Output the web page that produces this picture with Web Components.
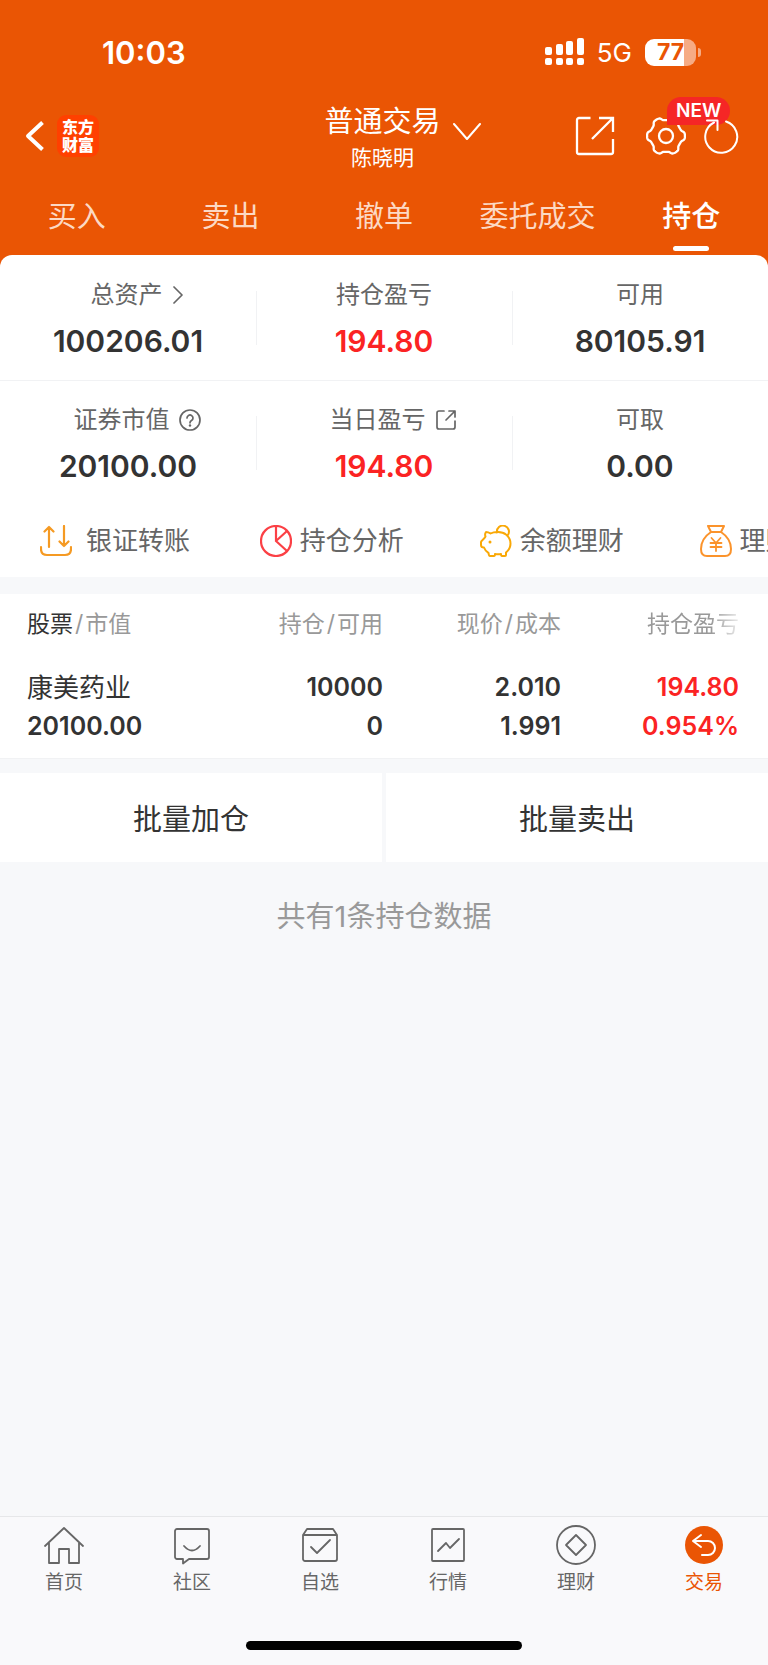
<!DOCTYPE html>
<html lang="zh-CN">
<head>
<meta charset="utf-8">
<meta name="viewport" content="width=device-width, initial-scale=1">
<title>普通交易 - 持仓</title>
<style>
  html {
    height: 100%;
  }
  body {
    margin: 0;
    min-height: 100%;
    display: flex;
    flex-direction: column;
    background: #f7f8fa;
    color: #333;
    font-family: Inter, "Noto Sans CJK SC", sans-serif;
    --brand: #ea5504;
    --up: #fb2323;
    --line: #f1f2f4;
    --muted: #666;
  }
  main {
    flex: 1;
  }
  .top {
    background: var(--brand);
  }
</style>
</head>
<body>
  <div class="top">
    <status-bar time="10:03" network="5G" battery="77"></status-bar>
    <trade-header badge="NEW">
      普通交易
      <span slot="account">陈晓明</span>
    </trade-header>
    <trade-tabs items="买入,卖出,撤单,委托成交,持仓" active="持仓"></trade-tabs>
    <asset-panel>
      <asset-cell value="100206.01" icon="right">总资产</asset-cell>
      <asset-cell value="194.80" up>持仓盈亏</asset-cell>
      <asset-cell value="80105.91">可用</asset-cell>
      <asset-cell value="20100.00" icon="help">证券市值</asset-cell>
      <asset-cell value="194.80" icon="open" up>当日盈亏</asset-cell>
      <asset-cell value="0.00">可取</asset-cell>
    </asset-panel>
  </div>
  <main>
    <quick-actions></quick-actions>
    <position-table></position-table>
    <batch-actions></batch-actions>
  </main>
  <bottom-nav active="交易"></bottom-nav>

<script>
const icons = {
  back: { box: '0 0 20 32', w: 20, svg: '<path d="M17.500 2.500 3 16l14.500 13.500" stroke-width="4" stroke-linecap="butt"/>' },
  down: { box: '0 0 28 18', w: 28, svg: '<path d="m1 1 13 15L27 1" stroke-width="2"/>' },
  share: { box: '0 0 40 40', w: 40, svg: '<path d="M15.500 2H4a2 2 0 0 0-2 2v32a2 2 0 0 0 2 2h32a2 2 0 0 0 2-2V23M24 2h14v14M38 2 17 23" stroke-width="2.300" stroke-linecap="butt" stroke-linejoin="miter"/>' },
  gear: { box: '0 0 40 40', w: 40, svg: '' },
  refresh: { box: '0 0 36 38', w: 36, svg: '<path d="M22 4.500A16 16 0 1 1 10 5.500" stroke-width="2"/><path d="M3 3.500h10.500V13" stroke-width="2"/>' },
  right: { box: '0 0 12 18', w: 12, svg: '<path d="m2 1 8 8-8 8" stroke-width="1.700"/>' },
  help: { box: '0 0 22 22', w: 22, svg: '<circle cx="11" cy="11" r="10" stroke-width="1.700"/><path d="M8 9a3 3 0 1 1 4.500 2.600c-1 .6-1.500 1-1.500 2.200" stroke-width="1.700"/><circle cx="11" cy="16.500" r="1.200" fill="currentColor" stroke="none"/>' },
  open: { box: '0 0 22 22', w: 22, svg: '<path d="M9 2H4a2 2 0 0 0-2 2v14a2 2 0 0 0 2 2h14a2 2 0 0 0 2-2v-6M14 2h6v6M20 2l-9 9" stroke-width="1.700"/>' },
  transfer: { box: '0 0 32 32', w: 32, svg: '<path d="M9 22V2M4.500 6.500 9 2l4.500 4.500M24 1v20M19.500 16.500 24 21l4.500-4.500M1 22v2q0 6 6 6h18q6 0 6-6v-2" stroke-width="2.200"/>' },
  pie: { box: '0 0 32 32', w: 32, svg: '<circle cx="16" cy="16" r="15" stroke-width="2.200"/><path d="M16 1v15l11 10M16 16 27 6" stroke-width="2.200"/>' },
  pig: { box: '0 0 32 32', w: 32, svg: '<path d="M6 7c2 0 3 .5 4.500 1.500C14 6.500 22 6 26 9.500c6 5 6 13 0 18v2.500q0 1-1 1h-3q-1 0-1-2-3 .5-6 0 0 2-1 2h-4q-1 0-1.500-3-3-1.500-4.500-5.500c-2 0-3-1-3-2.500v-3c0-1.500 3-2.500 4.500-5.500Q4.500 9 6 7ZM17 7.500a6 6 0 1 1 10.500 3" stroke-width="2"/><circle cx="10" cy="17" r="1.500" fill="currentColor" stroke="none"/>' },
  bag: { box: '0 0 32 32', w: 32, svg: '<path d="M8 1h16l-3 6H11ZM11 7C5 11 1 17 1 24q0 7 6 7h18q6 0 6-7c0-7-4-13-10-17" stroke-width="2"/><path d="m11.500 13 4.500 5 4.500-5M10.500 18h11M10.500 22h11M16 18v8" stroke-width="1.800"/>' },
  home: { box: '0 0 40 40', w: 40, svg: '<path d="M1 21 20 3l19 18M5 18v20h10V24h10v14h10V18" stroke-width="1.800"/>' },
  chat: { box: '0 0 40 40', w: 40, svg: '<path d="M5 4h30a2 2 0 0 1 2 2v26a2 2 0 0 1-2 2H17l-6 4.500V34H5a2 2 0 0 1-2-2V6a2 2 0 0 1 2-2ZM12 21q8 9 16 0" stroke-width="1.800"/>' },
  select: { box: '0 0 40 40', w: 40, svg: '<path d="M3 10 7 4h26l4 6v24a2 2 0 0 1-2 2H5a2 2 0 0 1-2-2ZM3 10h34M11 22l6 6 13-13" stroke-width="1.800"/>' },
  market: { box: '0 0 40 40', w: 40, svg: '<rect x="4" y="4" width="32" height="32" rx="1" stroke-width="1.800"/><path d="m10 26 8-8 4 5 9-9" stroke-width="1.800"/>' },
  wealth: { box: '0 0 40 40', w: 40, svg: '<circle cx="20" cy="20" r="19" stroke-width="1.800"/><path d="m20 10 10 10-10 10-10-10Z" stroke-width="1.800"/>' },
  trade: { box: '0 0 40 40', w: 40, svg: '<circle cx="20" cy="20" r="19" fill="currentColor" stroke="none"/><path d="m17 10-8 6 8 6M9 16h15a7 7 0 0 1 0 14h-6" stroke="#fff" stroke-width="2"/>' }
};

// The radius swings between tooth and valley, teeth point left and right.
function gearPath(cx, cy, teeth) {
  let d = '';
  for (let i = 0; i <= 180; i++) {
    const a = (i / 180) * Math.PI * 2;
    const r = 17.4 + 1.6 * Math.tanh(Math.cos(a * teeth) * 2);
    d += (i ? 'L' : 'M') + (cx + r * Math.cos(a)).toFixed(2) + ' ' + (cy + r * Math.sin(a)).toFixed(2);
  }
  return d + 'Z';
}
icons.gear.svg = `<path d="${gearPath(20, 20, 6)}" stroke-width="2.300"/><circle cx="20" cy="20" r="7" stroke-width="2.300"/>`;

class BaseElement extends HTMLElement {
  connectedCallback() {
    if (this.shadowRoot) return;
    this.attachShadow({ mode: 'open' });
    this.shadowRoot.innerHTML = this.render();
  }
}

class AppIcon extends BaseElement {
  render() {
    const icon = icons[this.getAttribute('name')];
    return `
      <style>
        :host { display: inline-flex; flex: none; }
        svg { display: block; fill: none; stroke: currentColor; stroke-linecap: round; stroke-linejoin: round; }
      </style>
      <svg width="${icon.w}" viewBox="${icon.box}" aria-hidden="true">${icon.svg}</svg>
    `;
  }
}

class StatusBar extends BaseElement {
  render() {
    const level = this.getAttribute('battery');
    return `
      <style>
        :host {
          display: flex;
          align-items: center;
          justify-content: space-between;
          height: 104px;
          padding: 0 67px 0 102px;
          color: #fff;
        }
        .time { font-size: 31px; font-weight: 600; }
        .right { display: flex; align-items: center; gap: 13px; }
        .net { font-size: 26px; }
        .signal { display: block; }
        .battery { display: flex; align-items: center; gap: 2px; }
        .body {
          width: 51px;
          line-height: 27px;
          border-radius: 9px;
          text-align: center;
          font-size: 23px;
          font-weight: 700;
          color: var(--brand);
          background: linear-gradient(90deg, #fff ${level}%, #f6ab84 ${level}%);
        }
        .cap { width: 3px; height: 9px; border-radius: 0 4px 4px 0; background: #f6ab84; }
      </style>
      <span class="time">${this.getAttribute('time')}</span>
      <span class="right">
        <svg class="signal" width="39" height="28" fill="#fff" aria-hidden="true">
          <rect x="0" y="9" width="7" height="8" rx="2"/><rect x="11" y="6" width="7" height="11" rx="2"/>
          <rect x="21" y="3" width="7" height="14" rx="2"/><rect x="32" y="0" width="7" height="17" rx="2"/>
          <rect x="0" y="20" width="7" height="7" rx="2"/><rect x="11" y="20" width="7" height="7" rx="2"/>
          <rect x="21" y="20" width="7" height="7" rx="2"/><rect x="32" y="20" width="7" height="7" rx="2"/>
        </svg>
        <span class="net">${this.getAttribute('network')}</span>
        <span class="battery"><span class="body">${level}</span><span class="cap"></span></span>
      </span>
    `;
  }
}

class TradeHeader extends BaseElement {
  render() {
    return `
      <style>
        :host {
          display: grid;
          grid-template-columns: 1fr auto 1fr;
          grid-template-rows: 64px;
          align-items: center;
          padding: 0 28px 0 25px;
          color: #fff;
        }
        button { display: flex; padding: 0; border: 0; background: none; color: inherit; font: inherit; }
        .left, .right { display: flex; align-items: center; }
        .left { gap: 12px; }
        .logo {
          width: 42px;
          height: 42px;
          box-sizing: border-box;
          padding-top: 2px;
          border-radius: 9px;
          background: #ff4000;
          text-align: center;
          font-family: "Noto Sans CJK SC", sans-serif;
          font-size: 16px;
          font-weight: 900;
          line-height: 18px;
        }
        .title { position: relative; padding-top: 5px; text-align: center; }
        .name { font-size: 29px; line-height: 38px; }
        .account { font-size: 21px; line-height: 34px; }
        .arrow { position: absolute; left: 100%; top: 25px; margin-left: 12px; }
        .right { justify-content: flex-end; }
        .share { margin-right: 31px; }
        .gear { position: relative; margin-right: 18px; }
        .badge {
          position: absolute;
          left: 21px;
          top: -19px;
          padding: 0 9px;
          border-radius: 14px 14px 14px 0;
          background: #f52626;
          font-size: 19px;
          font-weight: 600;
          line-height: 28px;
        }
        .refresh { position: relative; }
      </style>
      <div class="left">
        <button aria-label="返回"><app-icon name="back"></app-icon></button>
        <div class="logo">东方<br>财富</div>
      </div>
      <button class="title">
        <span>
          <div class="name"><slot></slot></div>
          <div class="account"><slot name="account"></slot></div>
        </span>
        <app-icon class="arrow" name="down"></app-icon>
      </button>
      <div class="right">
        <button class="share" aria-label="分享"><app-icon name="share"></app-icon></button>
        <button class="gear" aria-label="设置"><app-icon name="gear"></app-icon><span class="badge">${this.getAttribute('badge')}</span></button>
        <button class="refresh" aria-label="刷新"><app-icon name="refresh"></app-icon></button>
      </div>
    `;
  }
}

class TradeTabs extends BaseElement {
  render() {
    const active = this.getAttribute('active');
    const tabs = this.getAttribute('items').split(',').map((item) =>
      `<button role="tab" aria-selected="${item === active}">${item}</button>`
    ).join('');
    return `
      <style>
        :host { display: block; }
        div { display: grid; grid-template-columns: repeat(5, 1fr); padding-top: 18px; }
        button {
          display: flex;
          flex-direction: column;
          align-items: center;
          height: 69px;
          padding: 9px 0 0;
          border: 0;
          background: none;
          color: #fcd9c4;
          font-family: inherit;
          font-size: 29px;
          line-height: 44px;
        }
        button[aria-selected="true"] { color: #fff; font-weight: 500; }
        button[aria-selected="true"]::after {
          content: "";
          width: 36px;
          height: 5px;
          margin-top: 7px;
          border-radius: 3px;
          background: #fff;
        }
      </style>
      <div role="tablist">${tabs}</div>
    `;
  }
}

class AssetPanel extends BaseElement {
  render() {
    return `
      <style>
        :host {
          display: grid;
          grid-template-columns: repeat(3, 1fr);
          border-radius: 12px 12px 0 0;
          background: linear-gradient(var(--line), var(--line)) 0 125px / 100% 1px no-repeat #fff;
        }
        ::slotted(asset-cell:nth-child(3n+2)), ::slotted(asset-cell:nth-child(3n)) { --edge: var(--line); }
      </style>
      <slot></slot>
    `;
  }
}

class AssetCell extends BaseElement {
  render() {
    const icon = this.getAttribute('icon');
    return `
      <style>
        :host {
          display: flex;
          flex-direction: column;
          align-items: center;
          height: 125px;
          box-sizing: border-box;
          padding-top: 22px;
          background: linear-gradient(var(--edge, transparent), var(--edge, transparent)) left 36px / 1px 54px no-repeat;
        }
        .label { display: flex; align-items: center; gap: 9px; color: var(--muted); font-size: 24px; line-height: 36px; }
        :host([icon]) .label { padding-left: 18px; }
        .value { margin-top: 8px; font-size: 30px; font-weight: 600; line-height: 40px; }
        :host([up]) .value { color: var(--up); }
      </style>
      <div class="label"><slot></slot>${icon ? `<app-icon name="${icon}"></app-icon>` : ''}</div>
      <div class="value">${this.getAttribute('value')}</div>
    `;
  }
}

class QuickActions extends BaseElement {
  render() {
    const items = [
      ['transfer', '银证转账', '#f59a23'],
      ['pie', '持仓分析', '#fb4045'],
      ['pig', '余额理财', '#f9a806'],
      ['bag', '理财', '#fb932b']
    ];
    return `
      <style>
        :host { display: flex; height: 72px; padding-left: 40px; overflow: hidden; background: #fff; }
        button {
          flex: 0 0 30.2%;
          display: flex;
          align-items: center;
          gap: 8px;
          padding: 0 0 1px;
          border: 0;
          background: none;
          color: var(--muted);
          font-family: inherit;
          font-size: 26px;
          line-height: 36px;
          white-space: nowrap;
        }
        button:first-of-type { gap: 14px; }
      </style>
      ${items.map(([icon, text, color]) =>
        `<button><app-icon name="${icon}" style="color:${color}"></app-icon>${text}</button>`).join('')}
    `;
  }
}

class PositionTable extends BaseElement {
  render() {
    return `
      <style>
        :host { display: block; margin-top: 17px; padding: 0 29px 0 27px; border-bottom: 1px solid var(--line); background: #fff; }
        table { width: 100%; table-layout: fixed; border-collapse: collapse; }
        th, td { padding: 0; text-align: right; white-space: nowrap; }
        th:first-child, td:first-child { text-align: left; }
        th { height: 56px; color: #999; font-size: 23px; font-weight: 400; }
        th b { color: #333; font-weight: 400; }
        th i { margin: 0 2px; font-style: normal; }
        th:last-child { -webkit-mask: linear-gradient(90deg, #000 84%, transparent 104%); mask: linear-gradient(90deg, #000 84%, transparent 104%); }
        td { padding: 18px 0 12px; font-size: 25px; font-weight: 600; line-height: 39px; }
        td span { display: block; }
        .name { font-size: 26px; font-weight: 400; }
        .up { color: var(--up); }
      </style>
      <table>
        <thead>
          <tr>
            <th><b>股票</b><i>/</i>市值</th>
            <th>持仓<i>/</i>可用</th>
            <th>现价<i>/</i>成本</th>
            <th>持仓盈亏</th>
          </tr>
        </thead>
        <tbody>
          <tr>
            <td><span class="name">康美药业</span><span>20100.00</span></td>
            <td><span>10000</span><span>0</span></td>
            <td><span>2.010</span><span>1.991</span></td>
            <td class="up"><span>194.80</span><span>0.954%</span></td>
          </tr>
        </tbody>
      </table>
    `;
  }
}

class BatchActions extends BaseElement {
  render() {
    return `
      <style>
        :host { display: block; margin-top: 14px; }
        div { display: grid; grid-template-columns: 1fr 1fr; gap: 4px; }
        button { height: 89px; padding: 0 0 1px; border: 0; background: #fff; color: #333; font-family: inherit; font-size: 29px; }
        p { margin: 33px 0; text-align: center; color: #999; font-size: 29px; line-height: 44px; }
      </style>
      <div>
        <button>批量加仓</button>
        <button>批量卖出</button>
      </div>
      <p>共有1条持仓数据</p>
    `;
  }
}

class BottomNav extends BaseElement {
  render() {
    const active = this.getAttribute('active');
    const items = [
      ['home', '首页'],
      ['chat', '社区'],
      ['select', '自选'],
      ['market', '行情'],
      ['wealth', '理财'],
      ['trade', '交易']
    ];
    return `
      <style>
        :host { display: block; border-top: 1px solid #e6e7e9; background: #f9f9fb; }
        nav { display: grid; grid-template-columns: repeat(6, 1fr); padding-top: 8px; }
        a {
          display: flex;
          flex-direction: column;
          align-items: center;
          gap: 3px;
          color: var(--muted);
          font-size: 19px;
          line-height: 30px;
          text-decoration: none;
        }
        a[aria-current] { color: var(--brand); }
        .home-bar { width: 36%; height: 9px; margin: 43px auto 15px; border-radius: 5px; background: #000; }
      </style>
      <nav>
        ${items.map(([icon, text]) =>
          `<a href="#${icon}"${text === active ? ' aria-current="page"' : ''}><app-icon name="${icon}"></app-icon>${text}</a>`).join('')}
      </nav>
      <div class="home-bar"></div>
    `;
  }
}

customElements.define('app-icon', AppIcon);
customElements.define('status-bar', StatusBar);
customElements.define('trade-header', TradeHeader);
customElements.define('trade-tabs', TradeTabs);
customElements.define('asset-panel', AssetPanel);
customElements.define('asset-cell', AssetCell);
customElements.define('quick-actions', QuickActions);
customElements.define('position-table', PositionTable);
customElements.define('batch-actions', BatchActions);
customElements.define('bottom-nav', BottomNav);
</script>
</body>
</html>
